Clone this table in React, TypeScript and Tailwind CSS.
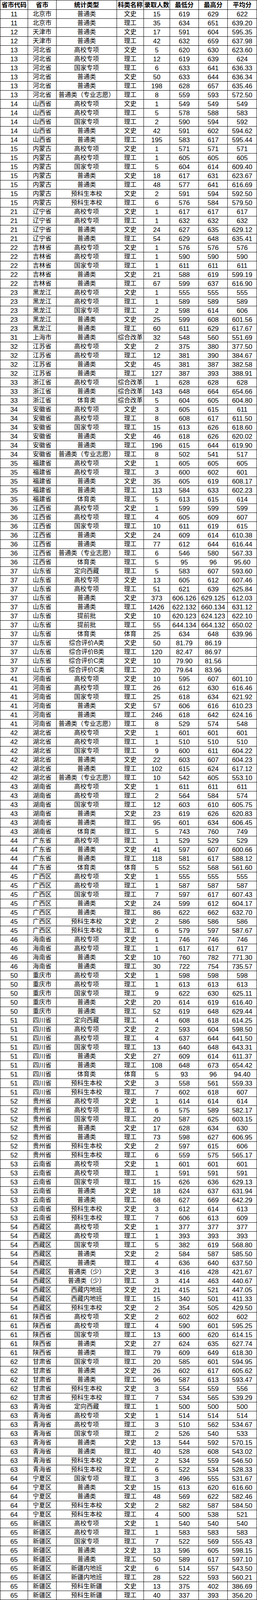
const header = ["省市代码", "省市", "统计类型", "科类名称", "录取人数", "最低分", "最高分", "平均分"];

const raw = `11|北京市|普通类|文史|15|619|629|622
11|北京市|普通类|理工|35|634|651|639.20
12|天津市|普通类|文史|17|591|604|595.35
12|天津市|普通类|理工|42|632|659|637.98
13|河北省|高校专项|文史|5|620|630|623.60
13|河北省|高校专项|理工|12|619|639|624
13|河北省|国家专项|理工|6|633|641|636.33
13|河北省|普通类|文史|50|633|644|636.34
13|河北省|普通类|理工|198|628|657|635.46
13|河北省|普通类（专业志愿）|理工|8|559|593|572.50
14|山西省|高校专项|文史|1|549|549|549
14|山西省|高校专项|理工|5|578|588|583
14|山西省|国家专项|理工|2|590|594|592
14|山西省|普通类|文史|42|591|602|594.62
14|山西省|普通类|理工|195|583|617|595.44
15|内蒙古|高校专项|文史|1|571|571|571
15|内蒙古|高校专项|理工|1|605|605|605
15|内蒙古|国家专项|理工|5|604|614|609.40
15|内蒙古|普通类|文史|18|617|631|623.67
15|内蒙古|普通类|理工|48|577|641|616.69
15|内蒙古|预科生本校|文史|2|591|594|592.50
15|内蒙古|预科生本校|理工|6|576|584|579.50
21|辽宁省|高校专项|文史|1|617|617|617
21|辽宁省|高校专项|理工|1|632|632|632
21|辽宁省|普通类|文史|24|627|635|629.12
21|辽宁省|普通类|理工|54|629|648|635.41
22|吉林省|高校专项|文史|1|576|576|576
22|吉林省|高校专项|理工|1|590|590|590
22|吉林省|国家专项|理工|1|611|611|611
22|吉林省|普通类|文史|21|588|619|599.19
22|吉林省|普通类|理工|67|599|637|616.90
23|黑龙江|高校专项|文史|1|555|555|555
23|黑龙江|高校专项|理工|1|589|589|589
23|黑龙江|国家专项|理工|2|598|614|606
23|黑龙江|普通类|文史|25|599|608|601.56
23|黑龙江|普通类|理工|60|611|629|617.67
31|上海市|普通类|综合改革|32|548|560|551.69
32|江苏省|高校专项|文史|2|375|380|377.50
32|江苏省|高校专项|理工|12|381|390|384.67
32|江苏省|普通类|文史|45|381|387|382.58
32|江苏省|普通类|理工|127|387|393|388.91
33|浙江省|高校专项|综合改革|1|628|628|628
33|浙江省|普通类|综合改革|143|648|664|654.66
33|浙江省|体育类|综合改革|5|604|605|604.80
34|安徽省|高校专项|文史|3|605|615|611
34|安徽省|高校专项|理工|8|608|617|611.50
34|安徽省|国家专项|理工|15|613|626|618.60
34|安徽省|普通类|文史|46|618|626|620.02
34|安徽省|普通类|理工|196|615|644|619.90
34|安徽省|普通类（专业志愿）|理工|8|502|541|517
35|福建省|高校专项|文史|1|605|605|605
35|福建省|高校专项|理工|3|600|602|601
35|福建省|普通类|文史|35|605|619|608.17
35|福建省|普通类|理工|113|584|633|602.23
35|福建省|体育类|理工|5|613|615|614
36|江西省|高校专项|文史|1|599|599|599
36|江西省|高校专项|理工|4|605|609|607
36|江西省|国家专项|理工|10|611|619|615
36|江西省|普通类|文史|24|609|614|610.38
36|江西省|普通类|理工|77|612|644|616.44
36|江西省|普通类（专业志愿）|理工|6|546|580|567.33
36|江西省|体育类|理工|5|95|96|95.60
37|山东省|定向西藏|理工|5|583|607|593.60
37|山东省|高校专项|文史|13|605|612|607.46
37|山东省|高校专项|理工|51|621|639|625.84
37|山东省|普通类|文史|373|606.126|629.125|612.03
37|山东省|普通类|理工|1426|622.132|660.134|631.12
37|山东省|提前批|文史|10|620.123|624.123|622.10
37|山东省|提前批|理工|55|644.134|664.132|650.02
37|山东省|体育类|体育|25|634|648|639.96
37|山东省|综合评价A类|文史|50|81.79|86.19|
37|山东省|综合评价B类|理工|120|82.47|86.97|
37|山东省|综合评价C类|文史|10|79.90|81.56|
37|山东省|综合评价C类|理工|20|79.64|83.96|
41|河南省|高校专项|文史|10|595|607|601.10
41|河南省|高校专项|理工|26|612|630|616.46
41|河南省|国家专项|理工|25|618|634|621.92
41|河南省|普通类|文史|57|606|616|610.23
41|河南省|普通类|理工|246|618|642|624.16
41|河南省|普通类（专业志愿）|理工|8|529|574|548
42|湖北省|高校专项|文史|1|601|601|601
42|湖北省|高校专项|理工|1|510|510|510
42|湖北省|国家专项|理工|9|600|611|604.22
42|湖北省|普通类|文史|22|603|607|604.23
42|湖北省|普通类|理工|102|615|624|617.12
42|湖北省|普通类（专业志愿）|理工|10|542|605|553.10
43|湖南省|高校专项|文史|1|611|611|611
43|湖南省|高校专项|理工|2|564|584|574
43|湖南省|国家专项|理工|12|603|610|605.75
43|湖南省|普通类|文史|23|619|626|620.83
43|湖南省|普通类|理工|95|601|634|606.45
43|湖南省|体育类|理工|5|743|760|749
44|广东省|高校专项|理工|1|529|529|529
44|广东省|普通类|文史|41|597|607|600.66
44|广东省|普通类|理工|118|581|617|588.12
44|广东省|体育类|体育|5|552|568|561.60
45|广西区|高校专项|文史|1|555|555|555
45|广西区|高校专项|理工|1|587|587|587
45|广西区|国家专项|理工|7|597|617|607.43
45|广西区|普通类|文史|24|599|612|604.17
45|广西区|普通类|理工|86|622|662|632.70
45|广西区|预科生本校|文史|2|586|586|586
45|广西区|预科生本校|理工|6|579|597|587.67
46|海南省|高校专项|文史|1|746|746|746
46|海南省|高校专项|理工|1|617|617|617
46|海南省|普通类|文史|10|760|782|771.30
46|海南省|普通类|理工|30|722|754|735.57
50|重庆市|高校专项|文史|1|598|598|598
50|重庆市|高校专项|理工|1|613|613|613
50|重庆市|国家专项|理工|9|622|630|625.11
50|重庆市|普通类|文史|20|614|619|616.40
50|重庆市|普通类|理工|52|619|648|629.44
51|四川省|定向西藏|理工|4|608|618|614.25
51|四川省|高校专项|文史|2|593|604|598.50
51|四川省|高校专项|理工|4|637|644|641.50
51|四川省|国家专项|理工|13|640|648|643.31
51|四川省|普通类|文史|27|609|614|611.37
51|四川省|普通类|理工|108|648|673|654.42
51|四川省|体育类|体育|5|93|96|94.40
51|四川省|预科生本校|文史|3|558|561|559.33
51|四川省|预科生本校|理工|7|602|618|607
52|贵州省|高校专项|文史|1|614|614|614
52|贵州省|高校专项|理工|6|575|589|582.17
52|贵州省|国家专项|理工|20|587|625|603.15
52|贵州省|普通类|文史|17|628|634|630
52|贵州省|普通类|理工|73|598|627|606.95
52|贵州省|预科生本校|文史|2|597|615|606
52|贵州省|预科生本校|理工|6|559|575|565.17
53|云南省|高校专项|文史|1|601|601|601
53|云南省|高校专项|理工|1|591|591|591
53|云南省|国家专项|理工|15|626|636|629.13
53|云南省|普通类|文史|18|624|637|631.94
53|云南省|普通类|理工|68|627|669|642.29
53|云南省|预科生本校|文史|3|612|614|613
53|云南省|预科生本校|理工|7|606|613|609
54|西藏区|高校专项|文史|1|377|377|377
54|西藏区|高校专项|理工|1|393|393|393
54|西藏区|国家专项|理工|5|382|619|568.80
54|西藏区|普通类|文史|2|584|587|585.50
54|西藏区|普通类|理工|4|636|640|637.50
54|西藏区|普通类（少）|文史|3|416|428|421.67
54|西藏区|普通类（少）|理工|3|414|463|440.67
54|西藏区|西藏内地班|文史|21|415|521|447.05
54|西藏区|西藏内地班|理工|15|340|501|411.33
54|西藏区|预科生本校|文史|2|354|505|429.50
61|陕西省|高校专项|文史|2|602|602|602
61|陕西省|高校专项|理工|4|590|601|595.25
61|陕西省|国家专项|理工|13|600|620|614.15
61|陕西省|普通类|文史|27|624|635|627.74
61|陕西省|普通类|理工|79|609|649|618.30
62|甘肃省|国家专项|理工|20|585|601|594.95
62|甘肃省|普通类|文史|26|602|617|605.62
62|甘肃省|普通类|理工|96|587|613|593.47
62|甘肃省|预科生本校|文史|3|554|559|556
62|甘肃省|预科生本校|理工|7|534|565|539.29
63|青海省|定向西藏|理工|1|500|500|500
63|青海省|高校专项|文史|1|514|514|514
63|青海省|高校专项|理工|3|510|562|534.67
63|青海省|国家专项|理工|2|526|540|533
63|青海省|普通类|文史|13|544|592|570.15
63|青海省|普通类|理工|40|528|608|543.02
63|青海省|预科生本校|文史|2|534|559|546.50
63|青海省|预科生本校|理工|6|522|534|528.33
64|宁夏区|国家专项|理工|3|496|555|531.67
64|宁夏区|普通类|文史|15|613|620|616.60
64|宁夏区|普通类|理工|48|569|622|582.46
64|宁夏区|预科生本校|文史|2|582|587|584.50
64|宁夏区|预科生本校|理工|4|500|538|521
65|新疆区|高校专项|文史|1|540|540|540
65|新疆区|高校专项|理工|1|583|583|583
65|新疆区|国家专项|理工|7|522|569|555.43
65|新疆区|普通类|文史|13|596|605|598.15
65|新疆区|普通类|理工|50|589|617|597.10
65|新疆区|新疆内地班|文史|6|514|557|543.50
65|新疆区|新疆内地班|理工|28|522|593|560.21
65|新疆区|预科生新疆|文史|13|375|402|386.69
65|新疆区|预科生新疆|理工|40|337|393|356.20
99|港澳台|联招|文史|19|457|527|492.42
99|港澳台|联招|理工|29|455|525|479.41`;

const rows = raw.split("\n").map((line) => line.split("|"));

// numeric columns: code, count, min, max, avg
const numCols = [0, 4, 5, 6, 7];

export default function App() {
  return (
    <div className="relative w-[659px] bg-white text-black font-['Liberation_Sans','Noto_Sans_CJK_SC',sans-serif]">
      <div className="grid grid-cols-[71px_73px_155px_69px_67px_74px_74px_75px] border-l border-t border-black">
        {header.map((h) => (
          <div
            key={h}
            className="h-[24px] flex items-center justify-center border-r border-b border-black text-[16px] font-bold leading-none whitespace-nowrap"
          >
            {h}
          </div>
        ))}
        {rows.map((row, i) =>
          row.map((cell, j) => (
            <div
              key={`${i}-${j}`}
              className={
                numCols.includes(j)
                  ? "h-[23px] flex items-center justify-center border-r border-b border-black text-[17px] leading-none whitespace-nowrap"
                  : "h-[23px] flex items-center justify-center border-r border-b border-black text-[16px] leading-none whitespace-nowrap"
              }
            >
              {cell}
            </div>
          ))
        )}
      </div>

      {/* watermark */}
      <div className="absolute left-[441px] bottom-[12px] text-[17px] leading-none text-[#6b6b6b]/80 font-['Noto_Sans_CJK_SC',sans-serif] whitespace-nowrap [text-shadow:0_0_2px_#fff]">
        头条 @高考志愿填报点点通
      </div>
    </div>
  );
}
